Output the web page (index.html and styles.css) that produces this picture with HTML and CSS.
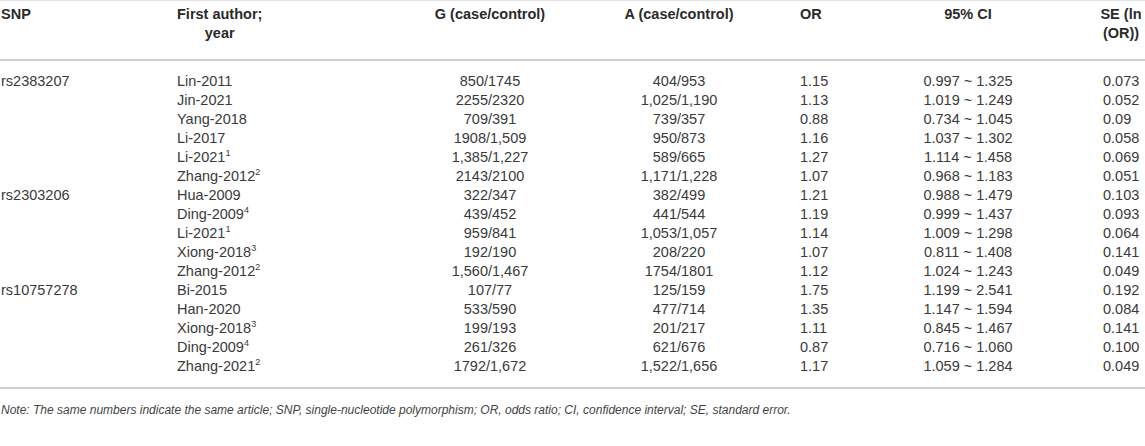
FILE: index.html
```html
<!DOCTYPE html>
<html lang="en">
<head>
  <meta charset="UTF-8" />
  <title>SNP meta-analysis</title>
  <link rel="stylesheet" href="styles.css">
</head>
<body>
  <table class="data">
    <colgroup>
      <col class="c-snp">
      <col class="c-author">
      <col class="c-g">
      <col class="c-a">
      <col class="c-or">
      <col class="c-ci">
      <col class="c-se">
    </colgroup>
    <thead>
      <tr>
        <th class="left">SNP</th>
        <th class="left"><span class="stack">First author;<br>year</span></th>
        <th>G (case/control)</th>
        <th>A (case/control)</th>
        <th class="or">OR</th>
        <th>95% CI</th>
        <th class="se">SE (ln (OR))</th>
      </tr>
    </thead>
    <tbody>
      <tr><td>rs2383207</td><td>Lin-2011</td><td class="mid">850/1745</td><td class="mid">404/953</td><td class="or">1.15</td><td class="mid">0.997 ~ 1.325</td><td class="se">0.073</td></tr>
      <tr><td></td><td>Jin-2021</td><td class="mid">2255/2320</td><td class="mid">1,025/1,190</td><td class="or">1.13</td><td class="mid">1.019 ~ 1.249</td><td class="se">0.052</td></tr>
      <tr><td></td><td>Yang-2018</td><td class="mid">709/391</td><td class="mid">739/357</td><td class="or">0.88</td><td class="mid">0.734 ~ 1.045</td><td class="se">0.09</td></tr>
      <tr><td></td><td>Li-2017</td><td class="mid">1908/1,509</td><td class="mid">950/873</td><td class="or">1.16</td><td class="mid">1.037 ~ 1.302</td><td class="se">0.058</td></tr>
      <tr><td></td><td>Li-2021<sup>1</sup></td><td class="mid">1,385/1,227</td><td class="mid">589/665</td><td class="or">1.27</td><td class="mid">1.114 ~ 1.458</td><td class="se">0.069</td></tr>
      <tr><td></td><td>Zhang-2012<sup>2</sup></td><td class="mid">2143/2100</td><td class="mid">1,171/1,228</td><td class="or">1.07</td><td class="mid">0.968 ~ 1.183</td><td class="se">0.051</td></tr>
      <tr><td>rs2303206</td><td>Hua-2009</td><td class="mid">322/347</td><td class="mid">382/499</td><td class="or">1.21</td><td class="mid">0.988 ~ 1.479</td><td class="se">0.103</td></tr>
      <tr><td></td><td>Ding-2009<sup>4</sup></td><td class="mid">439/452</td><td class="mid">441/544</td><td class="or">1.19</td><td class="mid">0.999 ~ 1.437</td><td class="se">0.093</td></tr>
      <tr><td></td><td>Li-2021<sup>1</sup></td><td class="mid">959/841</td><td class="mid">1,053/1,057</td><td class="or">1.14</td><td class="mid">1.009 ~ 1.298</td><td class="se">0.064</td></tr>
      <tr><td></td><td>Xiong-2018<sup>3</sup></td><td class="mid">192/190</td><td class="mid">208/220</td><td class="or">1.07</td><td class="mid">0.811 ~ 1.408</td><td class="se">0.141</td></tr>
      <tr><td></td><td>Zhang-2012<sup>2</sup></td><td class="mid">1,560/1,467</td><td class="mid">1754/1801</td><td class="or">1.12</td><td class="mid">1.024 ~ 1.243</td><td class="se">0.049</td></tr>
      <tr><td>rs10757278</td><td>Bi-2015</td><td class="mid">107/77</td><td class="mid">125/159</td><td class="or">1.75</td><td class="mid">1.199 ~ 2.541</td><td class="se">0.192</td></tr>
      <tr><td></td><td>Han-2020</td><td class="mid">533/590</td><td class="mid">477/714</td><td class="or">1.35</td><td class="mid">1.147 ~ 1.594</td><td class="se">0.084</td></tr>
      <tr><td></td><td>Xiong-2018<sup>3</sup></td><td class="mid">199/193</td><td class="mid">201/217</td><td class="or">1.11</td><td class="mid">0.845 ~ 1.467</td><td class="se">0.141</td></tr>
      <tr><td></td><td>Ding-2009<sup>4</sup></td><td class="mid">261/326</td><td class="mid">621/676</td><td class="or">0.87</td><td class="mid">0.716 ~ 1.060</td><td class="se">0.100</td></tr>
      <tr><td></td><td>Zhang-2021<sup>2</sup></td><td class="mid">1792/1,672</td><td class="mid">1,522/1,656</td><td class="or">1.17</td><td class="mid">1.059 ~ 1.284</td><td class="se">0.049</td></tr>
    </tbody>
  </table>
  <p class="note">Note: The same numbers indicate the same article; SNP, single-nucleotide polymorphism; OR, odds ratio; CI, confidence interval; SE, standard error.</p>
</body>
</html>
```

FILE: styles.css
```css
body {
  margin: 0;
  background: #ffffff;
  font-family: "Liberation Sans", Arial, sans-serif;
  color: #3a3a3a;
  overflow: hidden;
}

.data {
  border-collapse: collapse;
  table-layout: fixed;
  width: 1180px;
  font-size: 14.5px;
  line-height: 19px;
  border-top: 1px solid #e4e4e4;
}

.c-snp { width: 172px; }
.c-author { width: 218px; }
.c-g { width: 200px; }
.c-a { width: 178px; }
.c-or { width: 102px; }
.c-ci { width: 196px; }
.c-se { width: 114px; }

th {
  font-weight: bold;
  color: #2a2a2a;
  text-align: center;
  vertical-align: top;
  padding: 4px 0 16px;
  border-bottom: 2px solid #cfcfcf;
}

th.left {
  text-align: left;
}

th:first-child,
td:first-child {
  padding-left: 1px;
}

th:nth-child(2),
td:nth-child(2) {
  padding-left: 5px;
}

.stack {
  display: inline-block;
  text-align: center;
}

th.se {
  width: 50px;
  padding-left: 28px;
  padding-right: 32px;
}

td {
  padding: 0;
  white-space: nowrap;
}

.mid {
  text-align: center;
}

.or {
  text-align: left;
  padding-left: 32px;
}

td.se {
  text-align: left;
  padding-left: 37px;
}

tbody tr:first-child td {
  padding-top: 11px;
}

tbody tr:last-child td {
  padding-bottom: 11px;
  border-bottom: 2px solid #cfcfcf;
}

sup {
  font-size: 9px;
  line-height: 0;
  vertical-align: 6px;
}

.note {
  margin: 14px 0 0 1px;
  font-size: 12px;
  font-style: italic;
  color: #444;
}
```
